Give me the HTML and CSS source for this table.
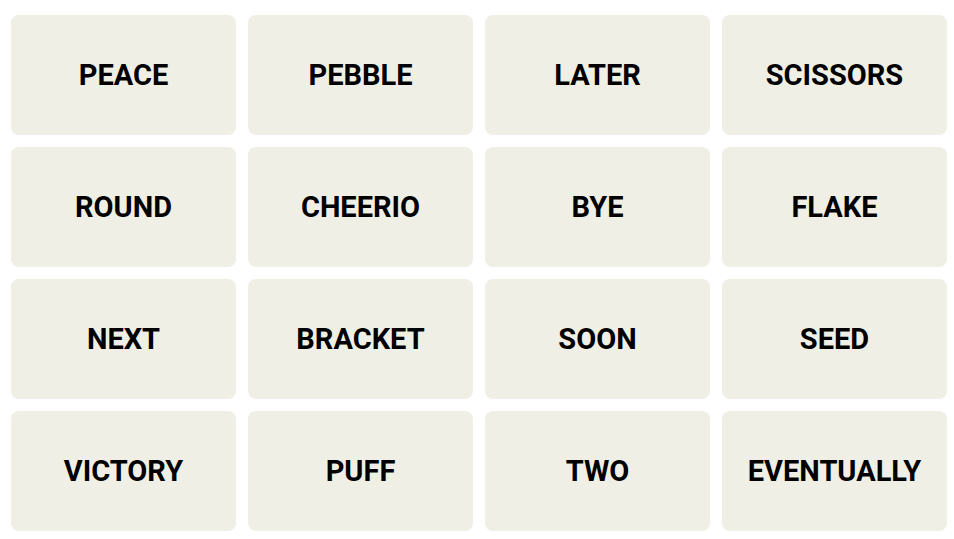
FILE: index.html
```html
<!DOCTYPE html>
<html>
<head>
<meta charset="utf-8">
<link rel="stylesheet" href="styles.css">
</head>
<body>
<div class="board">
  <div class="tile">PEACE</div>
  <div class="tile">PEBBLE</div>
  <div class="tile">LATER</div>
  <div class="tile">SCISSORS</div>
  <div class="tile">ROUND</div>
  <div class="tile">CHEERIO</div>
  <div class="tile">BYE</div>
  <div class="tile">FLAKE</div>
  <div class="tile">NEXT</div>
  <div class="tile">BRACKET</div>
  <div class="tile">SOON</div>
  <div class="tile">SEED</div>
  <div class="tile">VICTORY</div>
  <div class="tile">PUFF</div>
  <div class="tile">TWO</div>
  <div class="tile">EVENTUALLY</div>
</div>
</body>
</html>
```
FILE: styles.css
```css
html, body {
  margin: 0;
  background: #ffffff;
}
.board {
  display: grid;
  grid-template-columns: repeat(4, 225px);
  grid-auto-rows: 120px;
  column-gap: 12px;
  row-gap: 12px;
  padding: 15px 0 0 11px;
}
.tile {
  background: #efefe6;
  border-radius: 8px;
  display: flex;
  align-items: center;
  justify-content: center;
  padding-bottom: 1px;
  font-family: Roboto, "Liberation Sans", sans-serif;
  font-weight: 700;
  font-size: 29px;
  color: #000;
}
```
